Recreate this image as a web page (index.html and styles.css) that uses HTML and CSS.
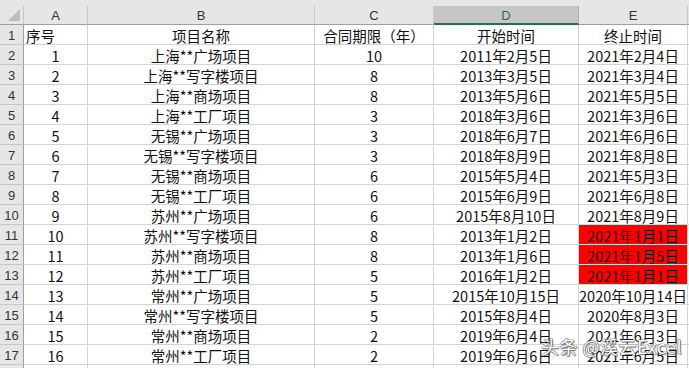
FILE: index.html
```html
<!DOCTYPE html>
<html lang="zh">
<head>
<meta charset="utf-8">
<link rel="stylesheet" href="styles.css">
</head>
<body>
<div class="top-strip"></div>
<div class="sheet">
  <div class="corner"><svg width="14" height="14" viewBox="0 0 14 14"><polygon points="13,1 13,13 1,13" fill="#bdbdbd"/></svg></div>
  <div class="colhead">A</div>
  <div class="colhead">B</div>
  <div class="colhead">C</div>
  <div class="colhead sel">D</div>
  <div class="colhead">E</div>
  <div class="colhead last"></div>

  <div class="rowhead">1</div><div class="c left">序号</div><div class="c">项目名称</div><div class="c">合同期限（年）</div><div class="c">开始时间</div><div class="c">终止时间</div><div class="c last"></div>
  <div class="rowhead">2</div><div class="c">1</div><div class="c">上海**广场项目</div><div class="c">10</div><div class="c">2011年2月5日</div><div class="c">2021年2月4日</div><div class="c last"></div>
  <div class="rowhead">3</div><div class="c">2</div><div class="c">上海**写字楼项目</div><div class="c">8</div><div class="c">2013年3月5日</div><div class="c">2021年3月4日</div><div class="c last"></div>
  <div class="rowhead">4</div><div class="c">3</div><div class="c">上海**商场项目</div><div class="c">8</div><div class="c">2013年5月6日</div><div class="c">2021年5月5日</div><div class="c last"></div>
  <div class="rowhead">5</div><div class="c">4</div><div class="c">上海**工厂项目</div><div class="c">3</div><div class="c">2018年3月6日</div><div class="c">2021年3月6日</div><div class="c last"></div>
  <div class="rowhead">6</div><div class="c">5</div><div class="c">无锡**广场项目</div><div class="c">3</div><div class="c">2018年6月7日</div><div class="c">2021年6月6日</div><div class="c last"></div>
  <div class="rowhead">7</div><div class="c">6</div><div class="c">无锡**写字楼项目</div><div class="c">3</div><div class="c">2018年8月9日</div><div class="c">2021年8月8日</div><div class="c last"></div>
  <div class="rowhead">8</div><div class="c">7</div><div class="c">无锡**商场项目</div><div class="c">6</div><div class="c">2015年5月4日</div><div class="c">2021年5月3日</div><div class="c last"></div>
  <div class="rowhead">9</div><div class="c">8</div><div class="c">无锡**工厂项目</div><div class="c">6</div><div class="c">2015年6月9日</div><div class="c">2021年6月8日</div><div class="c last"></div>
  <div class="rowhead">10</div><div class="c">9</div><div class="c">苏州**广场项目</div><div class="c">6</div><div class="c">2015年8月10日</div><div class="c">2021年8月9日</div><div class="c last"></div>
  <div class="rowhead">11</div><div class="c">10</div><div class="c">苏州**写字楼项目</div><div class="c">8</div><div class="c">2013年1月2日</div><div class="c red">2021年1月1日</div><div class="c last"></div>
  <div class="rowhead">12</div><div class="c">11</div><div class="c">苏州**商场项目</div><div class="c">8</div><div class="c">2013年1月6日</div><div class="c red">2021年1月5日</div><div class="c last"></div>
  <div class="rowhead">13</div><div class="c">12</div><div class="c">苏州**工厂项目</div><div class="c">5</div><div class="c">2016年1月2日</div><div class="c red">2021年1月1日</div><div class="c last"></div>
  <div class="rowhead">14</div><div class="c">13</div><div class="c">常州**广场项目</div><div class="c">5</div><div class="c">2015年10月15日</div><div class="c">2020年10月14日</div><div class="c last"></div>
  <div class="rowhead">15</div><div class="c">14</div><div class="c">常州**写字楼项目</div><div class="c">5</div><div class="c">2015年8月4日</div><div class="c">2020年8月3日</div><div class="c last"></div>
  <div class="rowhead">16</div><div class="c">15</div><div class="c">常州**商场项目</div><div class="c">2</div><div class="c">2019年6月4日</div><div class="c">2021年6月3日</div><div class="c last"></div>
  <div class="rowhead">17</div><div class="c">16</div><div class="c">常州**工厂项目</div><div class="c">2</div><div class="c">2019年6月6日</div><div class="c">2021年6月5日</div><div class="c last"></div>
  <div class="rowhead"></div><div class="c"></div><div class="c"></div><div class="c"></div><div class="c"></div><div class="c"></div><div class="c last"></div>
</div>
<div class="watermark">头条 @溪云Excel</div>
</body>
</html>
```

FILE: styles.css
```css
html, body {
  margin: 0;
  padding: 0;
  background: #ffffff;
  overflow: hidden;
  width: 689px;
  height: 368px;
}
body {
  position: relative;
  font-family: "Noto Sans CJK SC", "Noto Sans", sans-serif;
  font-size: 14.5px;
  color: #111;
}
.top-strip {
  height: 6px;
  background: #e6e6e6;
}
.sheet {
  display: grid;
  grid-template-columns: 24px 64px 227px 119px 145px 109px 1fr;
  grid-template-rows: 19px repeat(18, 20px);
}
.sheet > div {
  box-sizing: border-box;
  display: flex;
  align-items: center;
  justify-content: center;
  white-space: nowrap;
  overflow: hidden;
}
.corner {
  background: #e6e6e6;
  border-right: 1px solid #c6c6c6;
  border-bottom: 1px solid #9f9f9f;
  justify-content: flex-end !important;
  align-items: flex-end !important;
  padding: 0 2px 2px 0;
}
.corner svg { display: block; }
.colhead {
  background: #e6e6e6;
  border-right: 1px solid #c6c6c6;
  border-bottom: 1px solid #9f9f9f;
  font-family: "Liberation Sans", Arial, sans-serif;
  font-size: 13px;
  color: #333;
  padding-top: 1px;
}
.colhead.sel {
  background: #c6c6c6;
  color: #217346;
  border-bottom: 2px solid #217346;
  border-right-color: #b0b0b0;
}
.colhead.last { border-right: none; }
.rowhead {
  background: #e6e6e6;
  border-right: 1px solid #9f9f9f;
  border-bottom: 1px solid #c6c6c6;
  font-family: "Liberation Sans", Arial, sans-serif;
  font-size: 13px;
  color: #333;
  padding-top: 1px;
}
.c {
  border-right: 1px solid #d4d4d4;
  border-bottom: 1px solid #d4d4d4;
  padding-top: 1px;
}
.c.left {
  justify-content: flex-start !important;
  padding-left: 2px;
}
.c.red {
  background: #ff0000;
  color: #111;
}
.c.last { border-right: none; }
.watermark {
  position: absolute;
  left: 541px;
  top: 333px;
  font-family: "Noto Sans CJK SC", "Noto Sans", sans-serif;
  font-size: 18px;
  color: #ffffff;
  letter-spacing: 0.5px;
  text-shadow: 0 0 1px #555, 0 0 1px #555, 0 0 1px #555, 1px 1px 1px rgba(0,0,0,0.5);
}
```
